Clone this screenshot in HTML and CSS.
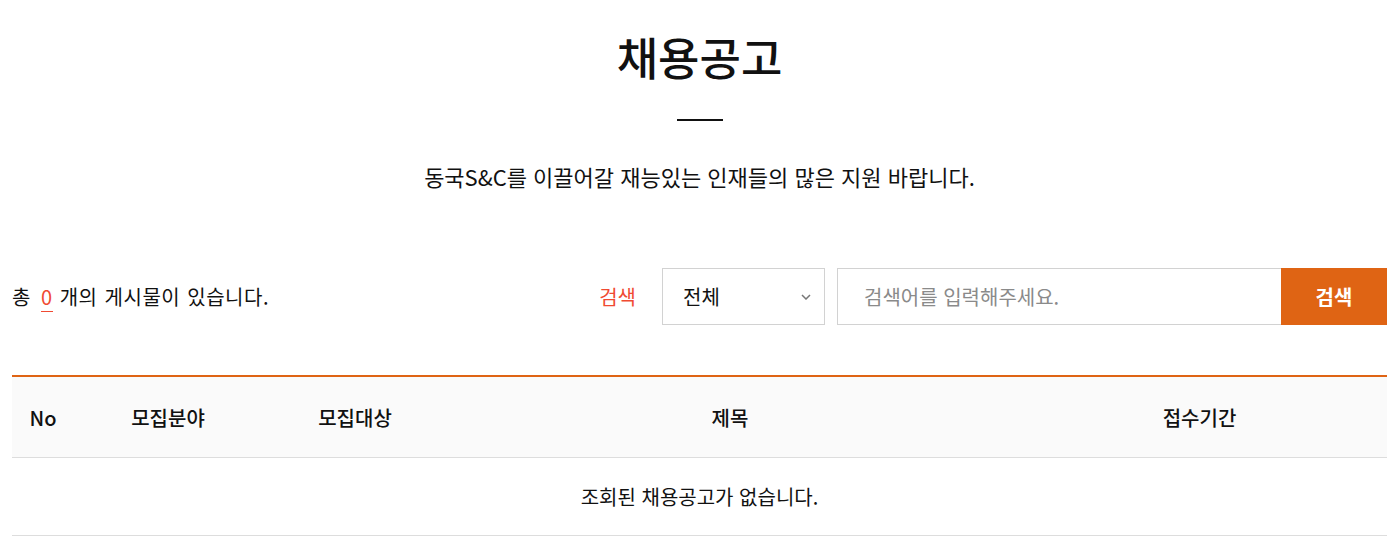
FILE: index.html
```html
<!DOCTYPE html>
<html lang="ko">
<head>
    <meta charset="UTF-8">
    <meta name="viewport" content="width=device-width, initial-scale=1.0">
    <title>채용공고</title>
    <link rel="stylesheet" href="styles.css">
</head>
<body>
    <div class="container">
        <div class="page-head">
            <h1>채용공고</h1>
            <span class="head-line"></span>
            <p class="head-desc">동국S&amp;C를 이끌어갈 재능있는 인재들의 많은 지원 바랍니다.</p>
        </div>

        <div class="board-top">
            <p class="total">총 <span class="count">0</span> 개의 게시물이 있습니다.</p>

            <form class="search-form">
                <label for="keyword" class="search-label">검색</label>
                <div class="select-box">
                    <span>전체</span>
                    <svg width="10" height="6" viewBox="0 0 10 6"><path d="M1 1l4 4 4-4" fill="none" stroke="#777" stroke-width="1.5"/></svg>
                </div>
                <input type="text" id="keyword" placeholder="검색어를 입력해주세요.">
                <button type="button" class="search-btn">검색</button>
            </form>
        </div>

        <table class="board">
            <colgroup>
                <col style="width: 62px">
                <col style="width: 188px">
                <col style="width: 186px">
                <col style="width: 564px">
                <col style="width: 375px">
            </colgroup>
            <thead>
                <tr>
                    <th>No</th>
                    <th>모집분야</th>
                    <th>모집대상</th>
                    <th>제목</th>
                    <th>접수기간</th>
                </tr>
            </thead>
            <tbody>
                <tr>
                    <td colspan="5">조회된 채용공고가 없습니다.</td>
                </tr>
            </tbody>
        </table>
    </div>
</body>
</html>
```

FILE: styles.css
```css
/* General styles */
body {
    margin: 0;
    font-family: "Noto Sans CJK KR", "Noto Sans", sans-serif;
    color: #111;
    background-color: #fff;
}

.container {
    width: 1375px;
    margin-left: 12px;
}

/* Page heading */
.page-head {
    display: flex;
    flex-direction: column;
    align-items: center;
    padding-top: 26px;
}

.page-head h1 {
    margin: 0;
    font-size: 45px;
    font-weight: 500;
    line-height: 62px;
}

.head-line {
    display: block;
    width: 46px;
    height: 2px;
    background: #111;
    margin-top: 31px;
}

.head-desc {
    margin: 39px 0 0;
    font-size: 22px;
    line-height: 32px;
}

/* Total + search */
.board-top {
    display: flex;
    justify-content: space-between;
    align-items: center;
    margin-top: 76px;
}

.total {
    margin: 0;
    font-size: 20px;
    letter-spacing: 0.5px;
    word-spacing: 1px;
}

.count {
    color: #f04a32;
    margin: 0 0 0 3px;
    border-bottom: 1px solid #f04a32;
}

.search-form {
    display: flex;
    align-items: center;
}

.search-label {
    color: #f04a32;
    font-size: 20px;
    margin-right: 26px;
}

.select-box {
    display: flex;
    justify-content: space-between;
    align-items: center;
    box-sizing: border-box;
    width: 163px;
    height: 57px;
    padding: 0 13px 0 20px;
    border: 1px solid #d2d2d2;
    font-size: 20px;
    margin-right: 12px;
}

input {
    box-sizing: border-box;
    width: 444px;
    height: 57px;
    padding: 0 26px;
    border: 1px solid #d2d2d2;
    border-right: none;
    font-family: inherit;
    font-size: 20px;
    outline: none;
}

input::placeholder {
    color: #8a8a8a;
}

.search-btn {
    width: 106px;
    height: 57px;
    border: none;
    background-color: #df6414;
    color: #fff;
    font-family: inherit;
    font-size: 20px;
    font-weight: 700;
    cursor: pointer;
}

/* Board table */
.board {
    width: 100%;
    margin-top: 50px;
    border-collapse: collapse;
    table-layout: fixed;
    border-top: 2px solid #df6414;
}

.board th {
    height: 80px;
    padding: 0;
    background: #fafafa;
    font-size: 20px;
    font-weight: 500;
    border-bottom: 1px solid #ddd;
}

.board td {
    height: 77px;
    padding: 0;
    text-align: center;
    font-size: 20px;
    border-bottom: 1px solid #ddd;
}
```
